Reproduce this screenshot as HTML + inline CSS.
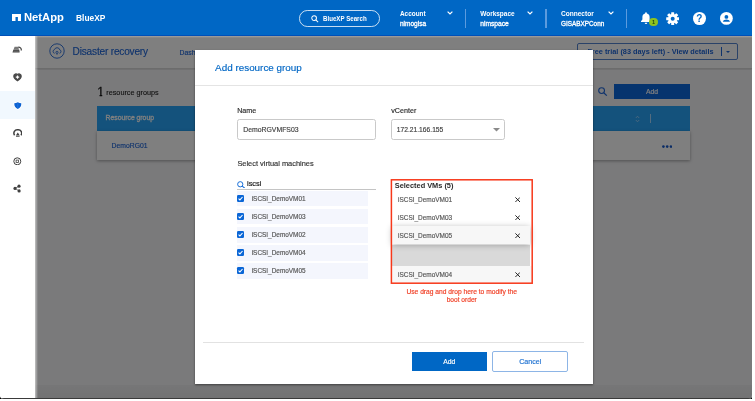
<!DOCTYPE html>
<html lang="en">
<head>
<meta charset="utf-8">
<title>BlueXP - Add resource group</title>
<style>
*{box-sizing:border-box;margin:0;padding:0}
html,body{width:755px;height:401px;overflow:hidden;background:#fff;font-family:"Liberation Sans",sans-serif;}
#app{will-change:transform;position:absolute;left:0;top:0;width:752px;height:398.5px;overflow:hidden;background:#fff;border-bottom-left-radius:4px;border-bottom-right-radius:4px}
.abs{position:absolute}
.t{position:absolute;white-space:nowrap;height:10px;line-height:10px;-webkit-text-stroke:.15px}
b,.b{font-weight:bold}
.t.b{-webkit-text-stroke:0}
/* top bar */
#top{position:absolute;left:0;top:0;width:752px;height:36px;background:#0067c5;color:#fff;border-bottom:1px solid #0050b8}
.sep{position:absolute;top:8.5px;width:1.3px;height:19.5px;background:#5c9bde}
/* sidebar */
#side{position:absolute;left:0;top:35.5px;width:35px;height:363px;background:#fff;}
#side .act{position:absolute;left:0;top:55.5px;width:35px;height:27.5px;background:#f1f8fe}
/* page */
#page{position:absolute;left:35px;top:35.5px;width:717px;height:363px;background:#f4f4f6}
#sub{position:absolute;left:0;top:0;width:717px;height:33px;background:#fff;border-bottom:1px solid #d8d8d8;box-shadow:0 .5px 1px rgba(0,0,0,.08)}
#overlay{position:absolute;left:35px;top:35.5px;width:717px;height:363px;background:rgba(0,0,0,0.5)}
#botshade{position:absolute;left:35px;top:385px;width:717px;height:13.5px;background:linear-gradient(rgba(0,0,0,.03),rgba(0,0,0,.07))}
#botline{position:absolute;left:0;top:397.5px;width:752px;height:1px;background:#3a3a3a}
/* modal */
#modal{position:absolute;left:195px;top:50px;width:397.5px;height:333.5px;background:#fff;color:#404040;box-shadow:0 1px 2px rgba(0,0,0,.5)}
.vm{position:absolute;left:237px;width:131.3px;height:15.7px;background:#f4f6fd}
.cb{position:absolute;left:0.4px;top:4px;width:7px;height:7px;background:#0a66d6;border-radius:1.2px}
.cb svg{position:absolute;left:0;top:0}
.x{position:absolute;width:5.4px;height:5.4px}
</style>
</head>
<body>
<div class="abs" style="left:0;top:392px;width:752px;height:6.5px;background:#000"></div>
<div id="app">
  <div id="page">
    <div id="sub">
      <svg class="abs" style="left:14.3px;top:7.8px" width="16" height="16" viewBox="0 0 16 16"><circle cx="8" cy="8" r="7.2" fill="none" stroke="#1f66d8" stroke-width="0.9"/><path d="M5.6 10.3a1.9 1.9 0 0 1 -.1-3.7 2.7 2.7 0 0 1 5.2.2 1.8 1.8 0 0 1 -.2 3.5" fill="none" stroke="#1f66d8" stroke-width="0.9"/><circle cx="8" cy="9.4" r="1.1" fill="none" stroke="#1f66d8" stroke-width="0.8"/><path d="M8 10.5v1.3" stroke="#1f66d8" stroke-width="0.8"/></svg>
      <div class="t" style="left:37.6px;top:11.5px;font-size:10.1px;letter-spacing:-.19px;color:#1f66d8">Disaster recovery</div>
      <div class="t" style="left:144.6px;top:12.7px;font-size:6.8px;color:#1f66d8">Dashboard</div>
      <div class="abs" style="left:542px;top:7.5px;width:161px;height:17px;border:1px solid #5585d0;border-radius:2px"></div>
      <div class="t b" style="left:552.4px;top:11px;font-size:7.34px;color:#1f66d8">Free trial (83 days left) - View details</div>
      <span class="abs" style="left:686px;top:11.5px;width:1px;height:9px;background:#1f66d8"></span>
      <span class="abs" style="left:691.3px;top:15.2px;border-left:2px solid transparent;border-right:2px solid transparent;border-top:2px solid #1f66d8"></span>
    </div>
    <div class="t" style="left:62.3px;top:50.5px;font-size:12px;color:#1a1a1a;-webkit-text-stroke:.3px;height:12px;line-height:12px;clip-path:polygon(0 0,100% 0,100% 70%,4.9px 70%,4.9px 100%,2.3px 100%,2.3px 70%,0 70%)">1</div>
    <div class="t" style="left:71.3px;top:52.5px;font-size:7.25px;color:#262626;-webkit-text-stroke:.12px">resource groups</div>
    <svg class="abs" style="left:563px;top:51.3px" width="9.5" height="9" viewBox="0 0 9.5 9"><circle cx="3.6" cy="3.6" r="2.9" fill="none" stroke="#1f66d8" stroke-width="1.1"/><path d="M5.7 5.7L8.8 8.6" stroke="#1f66d8" stroke-width="1.2"/></svg>
    <div class="abs" style="left:579.3px;top:48px;width:75.6px;height:15.6px;background:#0c68dc"></div>
    <div class="t" style="left:579.3px;width:75.6px;text-align:center;top:51px;font-size:6.8px;color:#fff">Add</div>
    <div class="abs" style="left:62.2px;top:70.9px;width:592.7px;height:24.7px;background:#28a4f8"></div>
    <div class="t" style="left:70.6px;top:77.7px;font-size:6.8px;color:#fff;-webkit-text-stroke:.3px">Resource group</div>
    <svg class="abs" style="left:600px;top:79px" width="5" height="8" viewBox="0 0 5 8"><path d="M.8 3L2.5 1.2 4.2 3M.8 5L2.5 6.8 4.2 5" fill="none" stroke="#a8d8ff" stroke-width="0.8"/></svg>
    <span class="abs" style="left:614.6px;top:78.5px;width:1px;height:9px;background:#a8d8ff"></span>
    <div class="abs" style="left:62.2px;top:95.6px;width:592.7px;height:29.2px;background:#fff;box-shadow:0 1px 3px rgba(0,0,0,.35)"></div>
    <div class="t" style="left:76.6px;top:105.3px;font-size:6.8px;color:#1f66d8">DemoRG01</div>
    <svg class="abs" style="left:626.500px;top:109.700px" width="10.400" height="3.200" viewBox="0 0 10.400 3.200"><circle cx="1.400" cy="1.600" r="1.300" fill="#1458cc"/><circle cx="5.200" cy="1.600" r="1.300" fill="#1458cc"/><circle cx="9" cy="1.600" r="1.300" fill="#1458cc"/></svg>
  </div>
  <div id="overlay"></div>
  <div id="botshade"></div>
  <div class="abs" style="left:35px;top:36px;width:717px;height:2px;background:linear-gradient(rgba(255,255,255,.28),rgba(255,255,255,0))"></div>

  <div class="abs" style="left:35px;top:36px;width:2.5px;height:362px;background:linear-gradient(to right,rgba(255,255,255,.55),rgba(255,255,255,0))"></div>
  <div id="side">
    <div class="act"></div>
    <!-- icons: centres y (abs) 49.5,77.3,105,133,161,189 ; side top=35.5 -->
    <svg class="abs" style="left:12px;top:10px" width="11" height="8" viewBox="0 0 11 8"><path d="M2.600 .8H6.200L7 3.800H1.500z" fill="#787878"/><path d="M6.200 1.200Q9.700 1.300 9.300 4.500" fill="none" stroke="#4a4a4a" stroke-width="1.3"/><path d="M1.300 3.700H7.300L7.600 6.400H.5z" fill="#444"/><path d="M1.400 5.200h5.400" stroke="#9a9a9a" stroke-width=".5"/></svg>
    <svg class="abs" style="left:12.8px;top:37.8px" width="9" height="8.4" viewBox="0 0 9 8.4"><path d="M4.5 7.8C2.4 6.6 .8 5 .8 3A2 2 0 0 1 4.5 1.9 2 2 0 0 1 8.2 3C8.2 5 6.6 6.6 4.5 7.8z" fill="#4a4a4a" stroke="#4a4a4a" stroke-width="1.2"/><path d="M4.500 2.400v3.400M2.800 4.100h3.400" stroke="#fff" stroke-width="1.2"/></svg>
    <svg class="abs" style="left:12.600px;top:65px" width="9.600" height="9.200" viewBox="-1 -1 9.600 9.200"><path d="M3.800 .2C5 .8 6.300 1 7.300 1.300 7.500 4 6.300 6 3.800 7 1.300 6 .1 4 .3 1.300 1.300 1 2.600 .8 3.800 .2z" fill="#0c62d2" stroke="#fff" stroke-width="1.400" paint-order="stroke" stroke-linejoin="round"/><path d="M3.800 1.300V6" stroke="#3a86e6" stroke-width=".5"/></svg>
    <svg class="abs" style="left:12.5px;top:93.6px" width="9.6" height="8" viewBox="0 0 9.6 8"><path d="M1.6 6.2A3.4 3.4 0 0 1 4.8 .8 3.4 3.4 0 0 1 8 6.2" fill="none" stroke="#404040" stroke-width="1.5"/><path d="M4.8 3.6L6.8 6.6H2.8z" fill="#404040"/><path d="M3 7.4h3.6" stroke="#404040" stroke-width=".8"/></svg>
    <svg class="abs" style="left:13px;top:121.2px" width="8.6" height="8.6" viewBox="0 0 8.6 8.6"><circle cx="4.3" cy="4.3" r="3.5" fill="none" stroke="#404040" stroke-width="1"/><rect x="3.100" y="3.100" width="2.400" height="2.400" fill="none" stroke="#404040" stroke-width=".8"/></svg>
    <svg class="abs" style="left:13px;top:148.6px" width="9" height="9" viewBox="0 0 9 9"><path d="M2 4.4L6 2.2M2 4.4L6.1 6.9" stroke="#404040" stroke-width=".7"/><circle cx="2" cy="4.4" r="1.6" fill="#404040"/><circle cx="6" cy="2.2" r="1.6" fill="#404040"/><circle cx="6.1" cy="6.9" r="1.6" fill="#404040"/></svg>
  </div>

  <div id="top">
    <svg class="abs" style="left:12px;top:13.8px" width="9.4" height="7.3" viewBox="0 0 9.4 7.3"><path d="M0 0h9.4v7.3H5.9V2.9H3.5v4.4H0z" fill="#fff"/></svg>
    <div class="t b" style="left:24.2px;top:11.9px;font-size:10.2px;transform-origin:0 0;transform:scaleX(1.1);height:12px;line-height:12px">NetApp</div>
    <div class="t b" style="left:76px;top:13.3px;font-size:8.4px">BlueXP</div>
    <div class="abs" style="left:298.7px;top:10px;width:81.5px;height:16.6px;border:1px solid rgba(255,255,255,.78);border-radius:8.3px"></div>
    <svg class="abs" style="left:311.2px;top:15.3px" width="7.8" height="7.8" viewBox="0 0 7 7"><circle cx="2.8" cy="2.8" r="2.1" fill="none" stroke="#fff" stroke-width="0.9"/><path d="M4.3 4.3L6.4 6.4" stroke="#fff" stroke-width="0.9"/></svg>
    <div class="t b" style="left:323px;top:13.7px;font-size:6.8px;transform-origin:0 50%;transform:scaleX(.905)">BlueXP Search</div>

    <div class="t b" style="left:400px;top:9.3px;font-size:6.4px">Account</div>
    <div class="t" style="left:400px;top:19.1px;font-size:6.5px;-webkit-text-stroke:.3px">nimogisa</div>
    <svg class="abs" style="left:446.8px;top:11px" width="6" height="3.6" viewBox="0 0 6 3.6"><path d="M.6 .6L3 2.900 5.400 .6" fill="none" stroke="#fff" stroke-width="1.25"/></svg>
    <div class="sep" style="left:464.6px"></div>
    <div class="t b" style="left:480.2px;top:9.3px;font-size:6.47px">Workspace</div>
    <div class="t" style="left:480.2px;top:19.1px;font-size:6.7px;-webkit-text-stroke:.3px">nimspace</div>
    <svg class="abs" style="left:527.3px;top:11px" width="6" height="3.6" viewBox="0 0 6 3.6"><path d="M.6 .6L3 2.900 5.400 .6" fill="none" stroke="#fff" stroke-width="1.25"/></svg>
    <div class="sep" style="left:545.4px"></div>
    <div class="t b" style="left:561px;top:9.3px;font-size:6.56px">Connector</div>
    <div class="t" style="left:561px;top:19.1px;font-size:6.39px;-webkit-text-stroke:.3px">GISABXPConn</div>
    <svg class="abs" style="left:607.6px;top:11px" width="6" height="3.6" viewBox="0 0 6 3.6"><path d="M.6 .6L3 2.900 5.400 .6" fill="none" stroke="#fff" stroke-width="1.25"/></svg>
    <div class="sep" style="left:625.8px"></div>

    <!-- bell -->
    <svg class="abs" style="left:640px;top:12px" width="12" height="13" viewBox="0 0 12 13"><path d="M6 .3a.9.9 0 0 1 .9.9v.3A3.6 3.6 0 0 1 9.6 5v2.6l1.4 1.7v.7H1v-.7L2.400 7.600V5a3.600 3.600 0 0 1 2.700-3.500v-.3a.9.9 0 0 1 .9-.9z" fill="#fff"/><path d="M4.700 10.700h2.600a1.300 1.300 0 0 1-2.600 0z" fill="#fff"/></svg>
    <div class="abs" style="left:649.2px;top:17.6px;width:8.6px;height:8.6px;border-radius:50%;background:#8dc21f"></div>
    <div class="t b" style="left:649.2px;width:8.6px;text-align:center;top:16.9px;font-size:5.6px;color:#1c4a10">1</div>
    <!-- gear -->
    <svg class="abs" style="left:665.6px;top:11.6px" width="13.4" height="13.4" viewBox="-6.7 -6.7 13.4 13.4"><g fill="#fff"><circle r="4.6"/><g id="tooth"><rect x="-1.5" y="-6.5" width="3" height="13" rx=".5"/></g><rect x="-1.5" y="-6.5" width="3" height="13" rx=".5" transform="rotate(45)"/><rect x="-1.5" y="-6.5" width="3" height="13" rx=".5" transform="rotate(90)"/><rect x="-1.5" y="-6.5" width="3" height="13" rx=".5" transform="rotate(135)"/></g><circle r="2" fill="#0067c5"/></svg>
    <!-- help -->
    <div class="abs" style="left:692.9px;top:11.9px;width:12.8px;height:12.8px;border-radius:50%;background:#fff"></div>
    <div class="t b" style="left:692.9px;width:12.8px;text-align:center;top:14px;font-size:10px;color:#0067c5">?</div>
    <!-- user -->
    <svg class="abs" style="left:719.8px;top:11.9px" width="12.8" height="12.8" viewBox="0 0 12.8 12.8"><circle cx="6.4" cy="6.4" r="6.4" fill="#fff"/><circle cx="6.4" cy="4.9" r="1.9" fill="#0067c5"/><path d="M2.900 9.800c0-1.700 2.300-2.400 3.500-2.400s3.500.7 3.500 2.400z" fill="#0067c5"/></svg>
  </div>

  <div id="modal"></div>
  <div id="mbody" class="abs" style="left:0;top:0;color:#404040">
    <div class="t" style="left:215.1px;top:62.3px;font-size:9.9px;color:#0067c5;height:12px;line-height:12px">Add resource group</div>
    <div class="abs" style="left:195px;top:85px;width:397.5px;height:1px;background:#e4e4e4"></div>

    <div class="t" style="left:237.2px;top:105.7px;font-size:7.15px;color:#2a2a2a">Name</div>
    <div class="t" style="left:391.3px;top:105.7px;font-size:7.15px;color:#2a2a2a">vCenter</div>
    <div class="abs" style="left:237px;top:119.2px;width:139.3px;height:20.7px;border:1px solid #c9c9c9;border-radius:2.5px"></div>
    <div class="t" style="left:243.2px;top:125.2px;font-size:6.89px">DemoRGVMFS03</div>
    <div class="abs" style="left:391px;top:119.2px;width:113.5px;height:20.7px;border:1px solid #c9c9c9;border-radius:2.5px"></div>
    <div class="t" style="left:396.8px;top:125.2px;font-size:6.7px">172.21.166.155</div>
    <svg class="abs" style="left:492.6px;top:128.2px" width="7" height="3.4" viewBox="0 0 7 3.4"><path d="M0 0h7L3.500 3.400z" fill="#8a8a8a"/></svg>

    <div class="t" style="left:237.4px;top:159px;font-size:7.43px;color:#333">Select virtual machines</div>
    <svg class="abs" style="left:237.4px;top:181px" width="8.4" height="7.4" viewBox="0 0 8 7"><circle cx="3.100" cy="3.100" r="2.500" fill="none" stroke="#0a66d6" stroke-width="0.9"/><path d="M4.900 4.900L7.400 6.700" stroke="#0a66d6" stroke-width="1"/></svg>
    <div class="t" style="left:247px;top:179.3px;font-size:7.4px;color:#1c1c1c;-webkit-text-stroke:.2px #1c1c1c">iscsi</div>
    <div class="abs" style="left:237px;top:189px;width:139.3px;height:1.3px;background:#c4c4c4"></div>
    <div class="vm" style="top:190.8px"><span class="cb"><svg width="7" height="7" viewBox="0 0 6.7 6.7"><path d="M1.5 3.4L2.800 4.700 5.300 1.900" fill="none" stroke="#fff" stroke-width="1"/></svg></span></div>
    <div class="t" style="left:251.7px;top:193.8px;font-size:6.43px;color:#555">iSCSI_DemoVM01</div>
    <div class="vm" style="top:208.8px"><span class="cb"><svg width="7" height="7" viewBox="0 0 6.7 6.7"><path d="M1.5 3.4L2.800 4.700 5.300 1.900" fill="none" stroke="#fff" stroke-width="1"/></svg></span></div>
    <div class="t" style="left:251.7px;top:211.9px;font-size:6.43px;color:#555">iSCSI_DemoVM03</div>
    <div class="vm" style="top:226.9px"><span class="cb"><svg width="7" height="7" viewBox="0 0 6.7 6.7"><path d="M1.5 3.4L2.800 4.700 5.300 1.900" fill="none" stroke="#fff" stroke-width="1"/></svg></span></div>
    <div class="t" style="left:251.7px;top:230.0px;font-size:6.43px;color:#555">iSCSI_DemoVM02</div>
    <div class="vm" style="top:245px"><span class="cb"><svg width="7" height="7" viewBox="0 0 6.7 6.7"><path d="M1.5 3.4L2.800 4.700 5.300 1.900" fill="none" stroke="#fff" stroke-width="1"/></svg></span></div>
    <div class="t" style="left:251.7px;top:248.1px;font-size:6.43px;color:#555">iSCSI_DemoVM04</div>
    <div class="vm" style="top:263.1px"><span class="cb"><svg width="7" height="7" viewBox="0 0 6.7 6.7"><path d="M1.5 3.4L2.800 4.700 5.300 1.900" fill="none" stroke="#fff" stroke-width="1"/></svg></span></div>
    <div class="t" style="left:251.7px;top:266.2px;font-size:6.43px;color:#555">iSCSI_DemoVM05</div>

    <div class="abs" style="left:392px;top:244.8px;width:138px;height:21.2px;background:#d9d9d9"></div>
    <div class="abs" style="left:392px;top:266px;width:139.5px;height:16.5px;background:#f7f7f7"></div>
    <div class="abs" style="left:392px;top:225.6px;width:138.4px;height:18.4px;background:#f7f7f7;box-shadow:0 1px 6px rgba(0,0,0,.28)"></div>
    <svg class="abs" style="left:389px;top:178px" width="146" height="108" viewBox="389 178 146 108"><rect x="391.4" y="179.800" width="140.800" height="103.400" fill="none" stroke="#f7381a" stroke-width="1.5"/></svg>
    <div class="t b" style="left:394.8px;top:180.6px;font-size:7.39px;color:#2a2a2a">Selected VMs (5)</div>
    <div class="t" style="left:398px;top:194.8px;font-size:6.46px;color:#555">iSCSI_DemoVM01</div>
    <svg class="x" style="left:514.7px;top:196.8px" viewBox="0 0 5.4 5.4"><path d="M.4 .4L5 5M5 .4L.4 5" stroke="#1a1a1a" stroke-width=".95"/></svg>
    <div class="t" style="left:398px;top:213.0px;font-size:6.46px;color:#555">iSCSI_DemoVM03</div>
    <svg class="x" style="left:514.7px;top:215.0px" viewBox="0 0 5.4 5.4"><path d="M.4 .4L5 5M5 .4L.4 5" stroke="#1a1a1a" stroke-width=".95"/></svg>
    <div class="t" style="left:398px;top:230.5px;font-size:6.46px;color:#555">iSCSI_DemoVM05</div>
    <svg class="x" style="left:514.7px;top:232.5px" viewBox="0 0 5.4 5.4"><path d="M.4 .4L5 5M5 .4L.4 5" stroke="#1a1a1a" stroke-width=".95"/></svg>
    <div class="t" style="left:398px;top:270.2px;font-size:6.46px;color:#555">iSCSI_DemoVM04</div>
    <svg class="x" style="left:514.7px;top:272.2px" viewBox="0 0 5.4 5.4"><path d="M.4 .4L5 5M5 .4L.4 5" stroke="#1a1a1a" stroke-width=".95"/></svg>

    <div class="t" style="left:391px;width:141.4px;text-align:center;top:286.6px;font-size:6.68px;color:#f03c22">Use drag and drop here to modify the</div>
    <div class="t" style="left:391px;width:141.4px;text-align:center;top:295px;font-size:6.62px;color:#f03c22">boot order</div>

    <div class="abs" style="left:203px;top:342.2px;width:381px;height:1px;background:#e2e2e2"></div>
    <div class="abs" style="left:411.8px;top:351.6px;width:75px;height:19.4px;background:#0067c5"></div>
    <div class="t" style="left:411.8px;width:75px;text-align:center;top:356.5px;font-size:6.8px;color:#fff">Add</div>
    <div class="abs" style="left:492.2px;top:351px;width:76px;height:20.5px;border:1px solid #8db5e6;border-radius:2px;background:#fff"></div>
    <div class="t" style="left:492.2px;width:76px;text-align:center;top:356.5px;font-size:7.1px;color:#1a6fd0">Cancel</div>
  </div>
  <div id="botline"></div>
</div>
</body>
</html>
